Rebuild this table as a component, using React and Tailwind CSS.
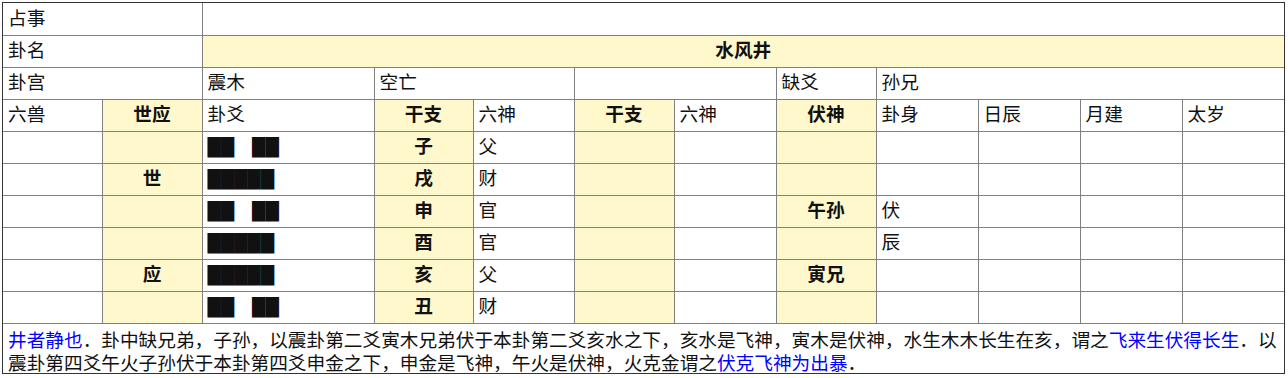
import React from "react";

// 六爻排盘表
const YAO_ROWS = [
  { yin: true, shiying: "", ganzhi: "子", liushen: "父", fushen: "", guashen: "" },
  { yin: false, shiying: "世", ganzhi: "戌", liushen: "财", fushen: "", guashen: "" },
  { yin: true, shiying: "", ganzhi: "申", liushen: "官", fushen: "午孙", guashen: "伏" },
  { yin: false, shiying: "", ganzhi: "酉", liushen: "官", fushen: "", guashen: "辰" },
  { yin: false, shiying: "应", ganzhi: "亥", liushen: "父", fushen: "寅兄", guashen: "" },
  { yin: true, shiying: "", ganzhi: "丑", liushen: "财", fushen: "", guashen: "" },
];

const COL_WIDTHS = [99, 100, 172, 99, 101, 100, 102, 100, 102, 102, 102, 102];

const cell = "border border-[#808080] h-[32px] px-[5px] pb-[4px] align-middle whitespace-nowrap";
const hl = `${cell} bg-[#fff8cc] font-bold text-center`;

const Yao = ({ yin }) => (
  <span className="font-['DejaVu_Sans',sans-serif] text-[17.3px] leading-none">
    {yin ? (
      <>
        ██<span className="font-['Noto_Sans_CJK_SC',sans-serif] text-[18px]">　</span>██
      </>
    ) : (
      "█████"
    )}
  </span>
);

const Note = ({ children }) => <span className="text-[#0000ff]">{children}</span>;

export default function App() {
  return (
    <div className="m-[2px] w-[1283px] border border-[#333] bg-white font-['Noto_Sans_CJK_SC',sans-serif] text-[18.67px] leading-[24px] text-[#111]">
      <table className="w-[1281px] table-fixed border-collapse border-hidden">
        <colgroup>
          {COL_WIDTHS.map((w, i) => (
            <col key={i} style={{ width: w }} />
          ))}
        </colgroup>
        <tbody>
          <tr>
            <td colSpan={2} className={cell}>占事</td>
            <td colSpan={10} className={cell}></td>
          </tr>
          <tr>
            <td colSpan={2} className={cell}>卦名</td>
            <td colSpan={10} className={hl}>水风井</td>
          </tr>
          <tr>
            <td colSpan={2} className={cell}>卦宫</td>
            <td className={cell}>震木</td>
            <td colSpan={2} className={cell}>空亡</td>
            <td colSpan={2} className={cell}></td>
            <td className={cell}>缺爻</td>
            <td colSpan={4} className={cell}>孙兄</td>
          </tr>
          <tr>
            <td className={cell}>六兽</td>
            <td className={hl}>世应</td>
            <td className={cell}>卦爻</td>
            <td className={hl}>干支</td>
            <td className={cell}>六神</td>
            <td className={hl}>干支</td>
            <td className={cell}>六神</td>
            <td className={hl}>伏神</td>
            <td className={cell}>卦身</td>
            <td className={cell}>日辰</td>
            <td className={cell}>月建</td>
            <td className={cell}>太岁</td>
          </tr>
          {YAO_ROWS.map((r, i) => (
            <tr key={i}>
              <td className={cell}></td>
              <td className={hl}>{r.shiying}</td>
              <td className={cell}>
                <Yao yin={r.yin} />
              </td>
              <td className={hl}>{r.ganzhi}</td>
              <td className={cell}>{r.liushen}</td>
              <td className={hl}></td>
              <td className={cell}></td>
              <td className={hl}>{r.fushen}</td>
              <td className={cell}>{r.guashen}</td>
              <td className={cell}></td>
              <td className={cell}></td>
              <td className={cell}></td>
            </tr>
          ))}
          <tr>
            <td colSpan={12} className="border border-[#808080] h-[50px] px-[5px] pt-[3px] pb-0 leading-[23px] align-top">
              <Note>井者静也</Note>．卦中缺兄弟，子孙，以震卦第二爻寅木兄弟伏于本卦第二爻亥水之下，亥水是飞神，寅木是伏神，水生木木长生在亥，谓之
              <Note>飞来生伏得长生</Note>．以震卦第四爻午火子孙伏于本卦第四爻申金之下，申金是飞神，午火是伏神，火克金谓之
              <Note>伏克飞神为出暴</Note>．
            </td>
          </tr>
        </tbody>
      </table>
    </div>
  );
}
